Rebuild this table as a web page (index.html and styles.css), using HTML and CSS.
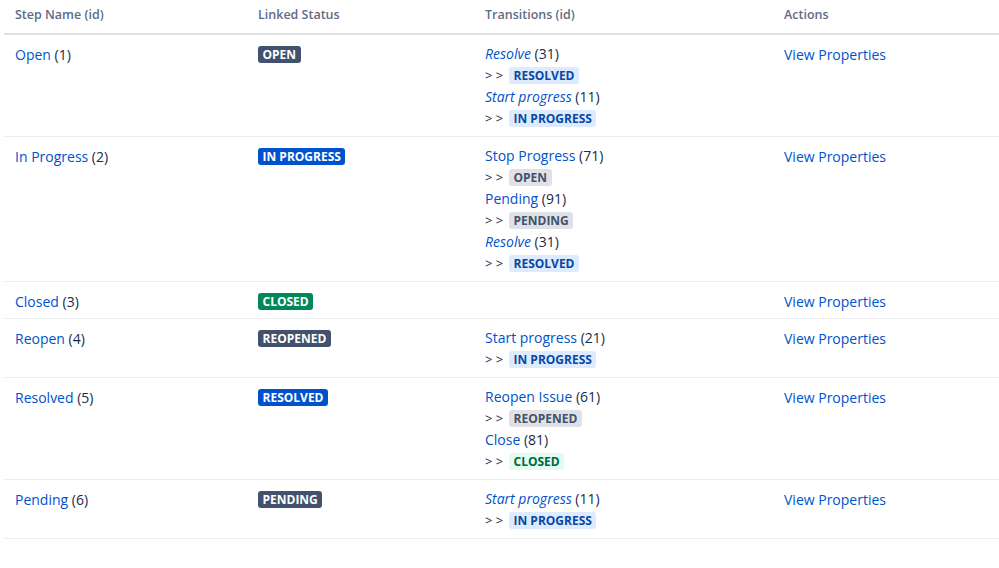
FILE: index.html
```html
<!DOCTYPE html>
<html>
<head>
<meta charset="utf-8">
<link rel="stylesheet" href="styles.css">
</head>
<body>
<table class="steps">
  <colgroup>
    <col class="c1"><col class="c2"><col class="c3"><col class="c4">
  </colgroup>
  <thead>
    <tr><th>Step Name (id)</th><th>Linked Status</th><th>Transitions (id)</th><th>Actions</th></tr>
  </thead>
  <tbody>
    <tr>
      <td><a href="#">Open</a> (1)</td>
      <td><span class="loz loz-grey">Open</span></td>
      <td>
        <div class="tr"><a href="#" class="glob">Resolve</a> (31)</div>
        <div class="to"><span class="arr">&gt; &gt;</span><span class="loz loz-s-blue">Resolved</span></div>
        <div class="tr"><a href="#" class="glob">Start progress</a> (11)</div>
        <div class="to"><span class="arr">&gt; &gt;</span><span class="loz loz-s-blue">In Progress</span></div>
      </td>
      <td><a href="#">View Properties</a></td>
    </tr>
    <tr>
      <td><a href="#">In Progress</a> (2)</td>
      <td><span class="loz loz-blue">In Progress</span></td>
      <td>
        <div class="tr"><a href="#">Stop Progress</a> (71)</div>
        <div class="to"><span class="arr">&gt; &gt;</span><span class="loz loz-s-grey">Open</span></div>
        <div class="tr"><a href="#">Pending</a> (91)</div>
        <div class="to"><span class="arr">&gt; &gt;</span><span class="loz loz-s-grey">Pending</span></div>
        <div class="tr"><a href="#" class="glob">Resolve</a> (31)</div>
        <div class="to"><span class="arr">&gt; &gt;</span><span class="loz loz-s-blue">Resolved</span></div>
      </td>
      <td><a href="#">View Properties</a></td>
    </tr>
    <tr>
      <td><a href="#">Closed</a> (3)</td>
      <td><span class="loz loz-green">Closed</span></td>
      <td></td>
      <td><a href="#">View Properties</a></td>
    </tr>
    <tr>
      <td><a href="#">Reopen</a> (4)</td>
      <td><span class="loz loz-grey">Reopened</span></td>
      <td>
        <div class="tr"><a href="#">Start progress</a> (21)</div>
        <div class="to"><span class="arr">&gt; &gt;</span><span class="loz loz-s-blue">In Progress</span></div>
      </td>
      <td><a href="#">View Properties</a></td>
    </tr>
    <tr>
      <td><a href="#">Resolved</a> (5)</td>
      <td><span class="loz loz-blue">Resolved</span></td>
      <td>
        <div class="tr"><a href="#">Reopen Issue</a> (61)</div>
        <div class="to"><span class="arr">&gt; &gt;</span><span class="loz loz-s-grey">Reopened</span></div>
        <div class="tr"><a href="#">Close</a> (81)</div>
        <div class="to"><span class="arr">&gt; &gt;</span><span class="loz loz-s-green">Closed</span></div>
      </td>
      <td><a href="#">View Properties</a></td>
    </tr>
    <tr>
      <td><a href="#">Pending</a> (6)</td>
      <td><span class="loz loz-grey">Pending</span></td>
      <td>
        <div class="tr"><a href="#" class="glob">Start progress</a> (11)</div>
        <div class="to"><span class="arr">&gt; &gt;</span><span class="loz loz-s-blue">In Progress</span></div>
      </td>
      <td><a href="#">View Properties</a></td>
    </tr>
  </tbody>
</table>
</body>
</html>
```
FILE: styles.css
```css
html, body {
  margin: 0;
  padding: 0;
  background: #fff;
}
body {
  padding-left: 4px;
  font-family: "Open Sans", "Noto Sans", sans-serif;
  font-size: 14px;
  color: #172b4d;
}
.steps {
  border-collapse: collapse;
  width: 995px;
  table-layout: fixed;
}
.c1 { width: 243px; }
.c2 { width: 227px; }
.c3 { width: 299px; }
.c4 { width: auto; }
th {
  text-align: left;
  font-size: 12.5px;
  font-weight: 600;
  color: #5e6c84;
  padding: 5px 11px 8px;
  line-height: 20px;
  border-bottom: 2px solid #dfe1e6;
}
td {
  vertical-align: top;
  padding: 9px 11px 6px;
  line-height: 21px;
  border-bottom: 1px solid #ebecf0;
}
a {
  color: #0052cc;
  text-decoration: none;
}
a.glob { font-style: italic; }
.tr { height: 20px; line-height: 20px; }
.to {
  height: 23px;
  display: flex;
  align-items: center;
}
.arr {
  font-size: 13px;
  color: #172b4d;
  width: 24px;
}
.loz {
  display: inline-block;
  font-size: 12px;
  font-weight: 700;
  text-transform: uppercase;
  line-height: 15px;
  padding: 1px 4.5px;
  border-radius: 3px;
  vertical-align: 1px;
}
.loz-grey { background: #42526e; color: #fff; }
.loz-blue { background: #0052cc; color: #fff; }
.loz-green { background: #00875a; color: #fff; }
.loz-s-blue { background: #deebff; color: #0747a6; }
.loz-s-grey { background: #dfe1e6; color: #42526e; }
.loz-s-green { background: #e3fcef; color: #006644; }
```
